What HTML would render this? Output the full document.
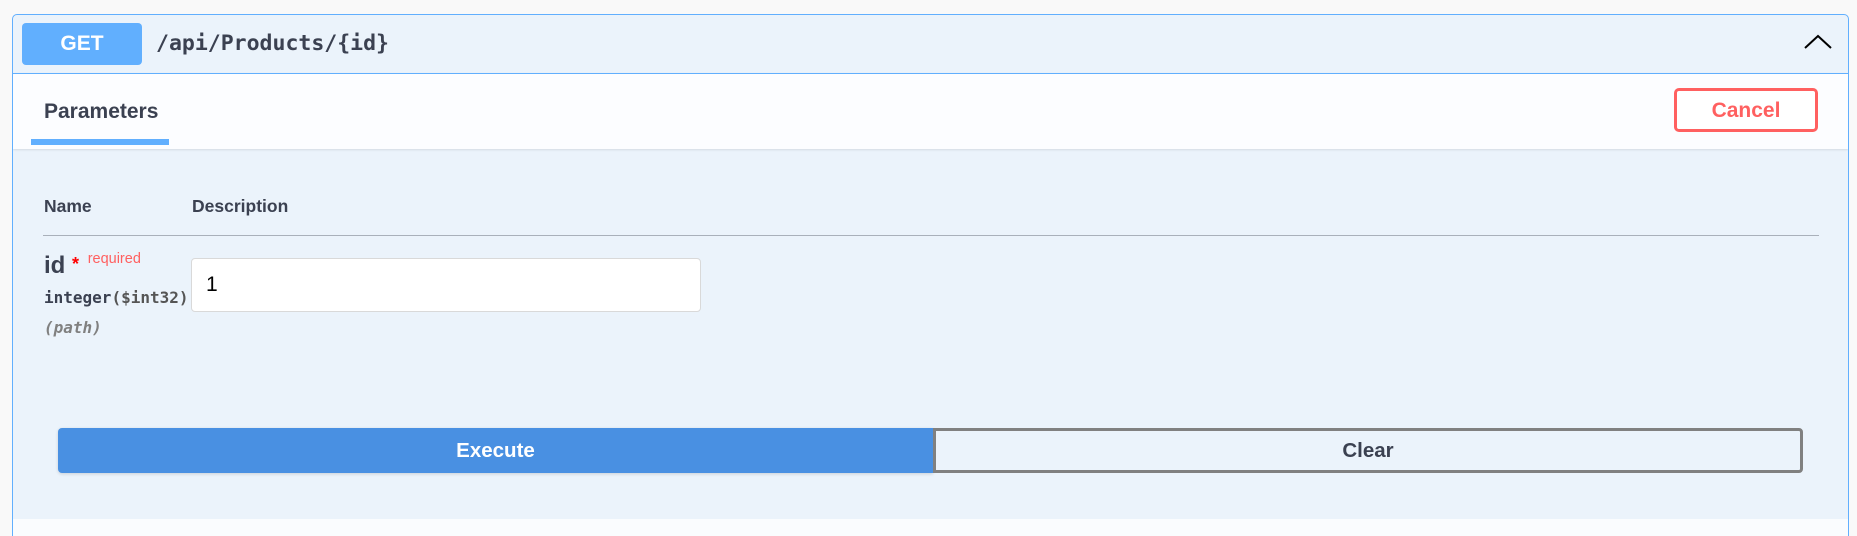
<!DOCTYPE html>
<html><head><meta charset="utf-8"><style>
*{box-sizing:border-box;margin:0;padding:0}
html,body{width:1857px;height:536px;overflow:hidden}
body{background:#f9f9f9;font-family:"Liberation Sans",Arial,sans-serif;color:#3b4151;position:relative}
.op{position:absolute;left:12px;top:14px;width:1837px;height:530px;border:1px solid #61affe;border-radius:5px;background:#ebf3fb;overflow:hidden}
.abs{position:absolute}
.get{left:9px;top:8px;width:120px;height:42px;background:#61affe;border-radius:4px;color:#fff;font-weight:bold;font-size:21px;text-align:center;line-height:42px}
.path{left:143px;top:8px;line-height:42px;font-family:"DejaVu Sans Mono",monospace;font-weight:bold;font-size:21.5px;color:#3b4151}
.hdr{left:0;top:58px;width:100%;height:76px;background:#fcfdff;border-top:1px solid #61affe;box-shadow:0 1px 2px rgba(0,0,0,.1)}
.tab{left:31px;top:26px;font-weight:bold;font-size:21px}
.ul{left:18px;top:65px;width:138px;height:6px;background:#61affe}
.cancel{left:1661px;top:14px;width:144px;height:44px;border:3px solid #ff6060;border-radius:5px;color:#ff6060;font-weight:bold;font-size:21px;text-align:center;line-height:40px;background:#fff}
.th{font-weight:bold;font-size:17.5px;top:181px}
.line{left:30px;top:220px;width:1776px;height:1px;background:#a9b0ba}
.btn{top:413px;height:45px;font-weight:bold;font-size:20.5px;text-align:center;line-height:45px}
.bottom{left:0;top:504px;width:100%;height:40px;background:#fafcfe}
</style></head><body>
<div class="op">
  <div class="abs get">GET</div>
  <div class="abs path">/api/Products/{id}</div>
  <svg class="abs" style="left:1790px;top:19px" width="30" height="16" viewBox="0 0 30 16"><path d="M2 14 L15 2 L28 14" fill="none" stroke="#000" stroke-width="2"/></svg>
  <div class="abs hdr">
    <div class="abs tab">Parameters</div>
    <div class="abs ul"></div>
    <div class="abs cancel">Cancel</div>
  </div>
  <div class="abs th" style="left:31px">Name</div>
  <div class="abs th" style="left:179px">Description</div>
  <div class="abs line"></div>
  <div class="abs" style="left:31px;top:237px;font-weight:bold;font-size:24px">id <span style="color:#f00;font-size:18px;position:relative;top:-3px">*</span> <span style="color:#ff6060;font-weight:normal;font-size:14.5px;position:relative;top:-10px;left:2px">required</span></div>
  <div class="abs" style="left:31px;top:273px;font-family:'DejaVu Sans Mono',monospace;font-weight:bold;font-size:16px">integer<span style="color:#555">($int32)</span></div>
  <div class="abs" style="left:31px;top:303px;font-family:'DejaVu Sans Mono',monospace;font-style:italic;font-weight:bold;font-size:16px;color:#808080">(path)</div>
  <div class="abs" style="left:178px;top:243px;width:510px;height:54px;background:#fff;border:1px solid #d9d9d9;border-radius:4px;font-size:21px;line-height:52px;padding-left:14px;color:#000">1</div>
  <div class="abs btn" style="left:45px;width:875px;background:#4990e2;color:#fff;border-radius:4px 0 0 4px;box-shadow:0 1px 3px rgba(0,0,0,.15)">Execute</div>
  <div class="abs btn" style="left:920px;width:870px;border:3px solid #808080;border-radius:0 4px 4px 0;line-height:39px;color:#3b4151">Clear</div>
  <div class="abs bottom"></div>
</div>
</body></html>
